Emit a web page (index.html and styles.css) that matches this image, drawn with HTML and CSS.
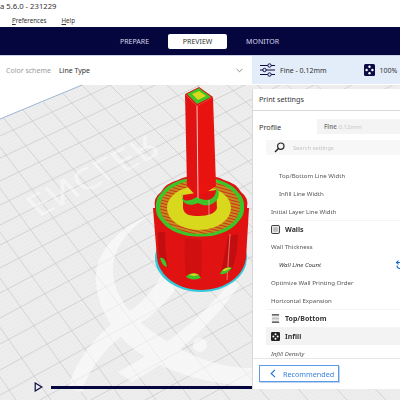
FILE: index.html
```html
<!DOCTYPE html>
<html lang="en">
<head>
  <meta charset="UTF-8">
  <title>Cura 5.6.0 - 231229</title>
  <link rel="stylesheet" href="styles.css">
</head>
<body>
  <div class="titlebar">a 5.6.0 - 231229</div>
  <div class="menubar">
    <span class="menu-item"><u>P</u>references</span>
    <span class="menu-item"><u>H</u>elp</span>
  </div>
  <div class="topnav">
    <span class="nav-item">PREPARE</span>
    <span class="nav-item nav-active">PREVIEW</span>
    <span class="nav-item">MONITOR</span>
  </div>
  <div class="toolbar">
    <div class="color-scheme">
      <span class="scheme-label">Color scheme</span>
      <span class="scheme-value">Line Type</span>
      <svg class="chevron" width="7" height="5" viewBox="0 0 7 5"><path d="M.7 1l2.8 2.8L6.3 1" fill="none" stroke="#8a8a8a" stroke-width="1"/></svg>
    </div>
    <div class="profile-summary">
      <svg class="sliders" width="15" height="14" viewBox="0 0 15 14">
        <path d="M0 2.5h15M0 7h15M0 11.5h15" stroke="#0b0b44" stroke-width="1.1"/>
        <circle cx="9.5" cy="2.5" r="1.7" fill="#e3edf9" stroke="#0b0b44"/>
        <circle cx="4.5" cy="7" r="1.7" fill="#e3edf9" stroke="#0b0b44"/>
        <circle cx="9.5" cy="11.5" r="1.7" fill="#e3edf9" stroke="#0b0b44"/>
      </svg>
      <span class="summary-text">Fine - 0.12mm</span>
      <svg class="infill-icon" width="11" height="12" viewBox="0 0 11 12">
        <rect width="11" height="12" rx="1.5" fill="#0b0b44"/>
        <g fill="#fff"><circle cx="5.5" cy="2.8" r="1.2"/><circle cx="2.6" cy="6" r="1.2"/><circle cx="8.4" cy="6" r="1.2"/><circle cx="5.5" cy="9.2" r="1.2"/></g>
      </svg>
      <span class="summary-text">100%</span>
    </div>
  </div>
  <div class="viewport">
    <svg class="scene" width="400" height="316" viewBox="0 84 400 316">
      <defs>
        <pattern id="fine" width="3" height="3" patternUnits="userSpaceOnUse" patternTransform="matrix(1 -0.48 0.9 1 0 0)">
          <path d="M3 0H0V3" fill="none" stroke="#e4e4e4" stroke-width="0.5"/>
        </pattern>
        <pattern id="hatch" width="3" height="3" patternUnits="userSpaceOnUse" patternTransform="rotate(15)">
          <rect width="3" height="3" fill="#c98a1c"/>
          <path d="M0 1.5H3" stroke="#c8351a" stroke-width="1"/>
        </pattern>
        <clipPath id="bedClip"><polygon points="0,119 82,85 400,85 400,400 0,400"/></clipPath>
      </defs>
      <rect x="0" y="84" width="400" height="316" fill="#fff"/>
      <polygon class="bed" points="0,119 82,85 400,85 400,400 0,400"/>
      <polygon points="0,119 82,85 400,85 400,400 0,400" fill="url(#fine)"/>
      <path class="bed-edge" d="M0 119L82 85"/>

      <g class="grid" clip-path="url(#bedClip)">
        <path d="M82 85L386 400M55 85L347 400M28 85L308 400M2 85L269 400M-23 85L230 400M-47 85L191 400M-76 85L156 400M-107 85L122 400M-138 85L87 400M-170 85L51 400M-202 85L16 400M110 85L425 400M139 85L463 400M167 85L502 400M197 85L540 400M227 85L577 400M257 85L615 400M287 85L653 400M316 85L691 400"/>
        <path d="M0 136L400 -48M0 158L400 -30M0 181L400 -11M0 205L400 9M0 225L400 25M0 245L400 41M0 268L400 60M0 293L400 81M0 318L400 102M0 344L400 128M0 370L400 150M0 395L400 175M0 422L400 202M0 450L400 230M0 480L400 260M0 510L400 290"/>
      </g>

      <g class="logo">
        <path d="M150 215C125 225 100 245 96 272C94 300 108 328 135 350C165 372 210 385 252 386L252 368C212 368 178 350 150 330C126 312 112 290 113 268C114 246 130 228 150 215Z"/>
        <path d="M68 388C78 354 102 328 134 308C146 298 156 286 162 274L176 288C168 300 158 310 148 318C116 336 92 360 82 392Z"/>
        <path d="M118 372C155 352 195 326 232 280L240 284C212 326 168 362 132 382Z"/>
        <circle cx="200" cy="345" r="7"/>
        <text class="logo-text" transform="matrix(.95 -0.5 -0.62 -0.66 22 200)">ENCLER</text>
      </g>

      <!-- printed part -->
      <ellipse cx="201" cy="258" rx="46" ry="34" fill="#35c8d8"/>
      <path d="M153 208L157 258C159 276 178 290 201 290C225 290 244 276 246 258L249 208Z" fill="#e01212"/>
      <path d="M158 232C158 245 159 256 161 262L168 268C166 256 165 244 165 232Z" fill="#c20e0e"/>
      <path d="M185 238C184 252 185 266 186 278L201 279C202 266 202 252 201 240Z" fill="#d01010"/>
      <path d="M228 236C226 248 224 258 221 272L232 270C236 258 238 246 238 234Z" fill="#c20e0e"/>
      <path d="M230 234L227 280" stroke="#f5b5b5" stroke-width="0.6"/>
      <path d="M160 258C163 257 166 260 167 267C163 266 161 262 160 258Z" fill="#3ec428"/>
      <path d="M186 277C190 272 197 272 201 278C196 280 190 280 186 277Z" fill="#3ec428"/>
      <path d="M189 275C192 273 196 273 199 275L194 276Z" fill="#d8d81c"/>
      <path d="M220 274C222 269 228 266 232 268C228 272 225 275 220 274Z" fill="#3ec428"/>
      <path d="M222 271C224 268 228 267 231 268L225 271Z" fill="#d8d81c"/>

      <!-- knob top, wavy rings -->
      <path class="outer-rim" d="M247 207Q249 216 241 222Q236 231 224 234Q214 239 201 238Q188 239 178 234Q166 231 161 222Q153 216 155 207Q153 198 161 192Q166 183 178 180Q188 175 201 176Q214 175 224 180Q236 183 241 192Q249 198 247 207Z"/>
      <path class="green-ring" d="M244 207Q245 215 238 222Q233 229 222 233Q212 237 200 236.5Q188 237 178 233Q167 229 162 222Q155 215 156 207Q155 199 162 192Q167 185 178 181Q188 177 200 177.5Q212 177 222 181Q233 185 238 192Q245 199 244 207Z"/>
      <ellipse cx="200" cy="207" rx="40" ry="27" fill="url(#hatch)"/>
      <ellipse class="yellow-fill" cx="199" cy="208" rx="32" ry="22"/>
      <path d="M183 195L183 208C184 215 190 216 199 216C208 216 216 213 217 208L216 190Z" fill="#e01212"/>
      <path d="M183 191C180 200 185 204 197 197C208 204 217 198 216 188L218 190C222 200 210 210 198 203C188 208 178 202 183 191Z" fill="#3ec428"/>
      <path d="M209 200V216" stroke="#f5b5b5" stroke-width="0.7"/>

      <!-- square tower -->
      <polygon points="185,94 197,106 198,198 187,186" fill="#e01212"/>
      <polygon points="197,106 213,97 216,186 198,198" fill="#e8130f"/>
      <path d="M197 106L198 198" stroke="#fbe3e3" stroke-width="0.8"/>
      <polygon points="185,94 199,87 213,97 197,106" fill="#e01212"/>
      <polygon points="187,94 199,88 211,97 197,104" fill="#3ec428"/>
      <polygon points="192,94 199,91 206,96 198,100" fill="#d8d81c"/>
    </svg>

    <div class="panel">
      <div class="panel-title">Print settings</div>
      <div class="profile-row">
        <span class="profile-label">Profile</span>
        <div class="profile-select"><b>Fine</b> <span>0.12mm</span></div>
      </div>
      <div class="search-box">
        <svg width="11" height="11" viewBox="0 0 11 11"><circle cx="6.8" cy="4.2" r="3.2" fill="none" stroke="#222" stroke-width="1.2"/><path d="M4.5 6.5L1 10" stroke="#222" stroke-width="1.5"/></svg>
        <span>Search settings</span>
      </div>
      <div class="settings-list">
        <div class="row row-child">Top/Bottom Line Width</div>
        <div class="row row-child">Infill Line Width</div>
        <div class="row">Initial Layer Line Width</div>
        <div class="row category">
          <svg width="9" height="9" viewBox="0 0 10 10"><rect x=".5" y=".5" width="9" height="9" rx="1.5" fill="#e8e8e8" stroke="#222"/><rect x="2.5" y="2.5" width="5" height="5" fill="#bbb"/></svg>
          Walls
        </div>
        <div class="row">Wall Thickness</div>
        <div class="row row-child row-changed">Wall Line Count
          <svg class="reset" width="9" height="10" viewBox="0 0 9 10"><path d="M2 2.5h3.5a3 3 0 1 1-3.5 3" fill="none" stroke="#1b6fd8" stroke-width="1.1"/><path d="M3.5 .6L1.4 2.5 3.5 4.4" fill="none" stroke="#1b6fd8" stroke-width="1.1"/></svg>
        </div>
        <div class="row">Optimize Wall Printing Order</div>
        <div class="row">Horizontal Expansion</div>
        <div class="row category">
          <svg width="9" height="9" viewBox="0 0 10 10"><path d="M1 1h8M1 9h8" stroke="#333" stroke-width="1.4"/><path d="M1 3.5h8M1 5h8M1 6.5h8" stroke="#aaa" stroke-width=".8"/></svg>
          Top/Bottom
        </div>
        <div class="row category category-open">
          <svg width="9" height="9" viewBox="0 0 10 10"><rect width="10" height="10" rx="1.5" fill="#222"/><g fill="#fff"><circle cx="5" cy="2.6" r="1.1"/><circle cx="2.6" cy="5" r="1.1"/><circle cx="7.4" cy="5" r="1.1"/><circle cx="5" cy="7.4" r="1.1"/></g></svg>
          Infill
        </div>
        <div class="row row-italic">Infill Density</div>
      </div>
      <div class="panel-footer">
        <div class="recommended">
          <svg width="6" height="9" viewBox="0 0 6 9"><path d="M5 .8L1.2 4.5 5 8.2" fill="none" stroke="#1b6fd8" stroke-width="1.1"/></svg>
          Recommended
        </div>
      </div>
    </div>

    <svg class="play" width="9" height="10" viewBox="0 0 9 10"><path d="M1.2 1L7.8 5 1.2 9Z" fill="none" stroke="#0b0b44" stroke-width="1.2"/></svg>
    <div class="slider-track"></div>
  </div>
</body>
</html>
```

FILE: styles.css
```css
html, body {
  margin: 0;
  height: 100%;
  overflow: hidden;
}
body {
  width: 400px;
  height: 400px;
  display: flex;
  flex-direction: column;
  font-family: "Noto Sans", Arial, sans-serif;
  color: #333;
  background: #fff;
}
.titlebar {
  height: 14px;
  flex: none;
  font-size: 7.7px;
  line-height: 13px;
  color: #333;
}
.menubar {
  height: 13px;
  flex: none;
  display: flex;
  gap: 15px;
  padding-left: 12px;
  font-size: 6.2px;
  line-height: 13px;
}
.topnav {
  height: 28px;
  flex: none;
  box-sizing: border-box;
  background: #06063f;
  display: flex;
  align-items: center;
  padding-left: 120px;
  gap: 19px;
  font-size: 7px;
  color: #d5d5e6;
}
.nav-active {
  width: 59px;
  height: 15px;
  line-height: 15px;
  text-align: center;
  background: #fff;
  color: #333;
  border-radius: 2px;
}
.toolbar {
  height: 29px;
  flex: none;
  box-sizing: border-box;
  border-top: 1px solid #cfd3ea;
  display: flex;
}
.color-scheme {
  width: 252px;
  box-sizing: border-box;
  display: flex;
  align-items: center;
  padding: 0 6px;
  font-size: 7px;
}
.scheme-label {
  color: #9a9a9a;
  margin-right: 8px;
}
.chevron {
  margin-left: auto;
  margin-right: 3px;
}
.profile-summary {
  flex: 1;
  background: #e3edf9;
  display: flex;
  align-items: center;
  padding-left: 8px;
  font-size: 7px;
}
.summary-text {
  margin-left: 5px;
  white-space: nowrap;
}
.infill-icon {
  margin-left: 37px;
}
.viewport {
  position: relative;
  flex: 1;
}
.scene {
  position: absolute;
  left: 0;
  top: 0;
  display: block;
}
.bed {
  fill: #eeeeee;
}
.bed-edge {
  stroke: #9db4d6;
  stroke-width: 1;
}
.grid path {
  fill: none;
  stroke: #c8c8c8;
  stroke-width: 0.7;
}
.logo {
  fill: #fff;
  opacity: 0.55;
}
.logo-text {
  font-family: "Noto Sans", sans-serif;
  font-size: 36px;
  opacity: 0.8;
}
.outer-rim {
  fill: #e01212;
}
.green-ring {
  fill: #3ec428;
}
.yellow-fill {
  fill: #d8d81c;
}
.panel {
  position: absolute;
  left: 252px;
  top: 5px;
  width: 148px;
  height: 300px;
  background: #fff;
  border-left: 1px solid #d8d8d8;
  display: flex;
  flex-direction: column;
  font-size: 6.1px;
}
.panel-title {
  height: 22px;
  flex: none;
  box-sizing: border-box;
  border-bottom: 1px solid #d8d8d8;
  padding-left: 6px;
  line-height: 21px;
  font-size: 7.2px;
}
.profile-row {
  display: flex;
  align-items: center;
  height: 15px;
  margin-top: 8px;
  padding-left: 6px;
  flex: none;
}
.profile-label {
  width: 58px;
  font-size: 7.3px;
}
.profile-select {
  flex: 1;
  height: 15px;
  line-height: 15px;
  background: #f4f4f4;
  padding-left: 7px;
  white-space: nowrap;
  color: #888;
}
.profile-select span {
  color: #c8c8c8;
}
.search-box {
  flex: none;
  display: flex;
  align-items: center;
  gap: 8px;
  height: 15px;
  margin: 6px 0 0 13px;
  padding-left: 8px;
  background: #f7f7f7;
  color: #c4c4c4;
  font-size: 5.7px;
}
.settings-list {
  flex: 1;
  margin-top: 12px;
  overflow: hidden;
  padding-left: 13px;
}
.row {
  height: 17.8px;
  line-height: 17.8px;
  padding-left: 5px;
  color: #555;
  white-space: nowrap;
  display: flex;
  align-items: center;
}
.row-child {
  padding-left: 13px;
}
.row-changed {
  font-style: italic;
  color: #333;
}
.row-italic {
  font-style: italic;
}
.reset {
  position: absolute;
  left: 142px;
}
.category {
  gap: 5px;
  font-weight: 700;
  font-size: 7px;
  color: #333;
  border-top: 1px solid #f4f4f4;
  box-sizing: border-box;
}
.category-open {
  background: #f3f3f3;
}
.panel-footer {
  flex: none;
  height: 31px;
  box-sizing: border-box;
  border-top: 1px solid #e6e6e6;
  padding: 6px 0 0 6px;
}
.recommended {
  width: 80px;
  height: 17px;
  box-sizing: border-box;
  border: 1px solid #5b9ae6;
  box-shadow: 1px 1px 0 #bcd4f2;
  display: flex;
  align-items: center;
  gap: 7px;
  padding-left: 10px;
  color: #3c82dc;
  font-size: 7.2px;
}
.play {
  position: absolute;
  left: 34px;
  top: 298px;
}
.slider-track {
  position: absolute;
  left: 51px;
  top: 302px;
  width: 201px;
  height: 3px;
  background: #06063f;
}
```
